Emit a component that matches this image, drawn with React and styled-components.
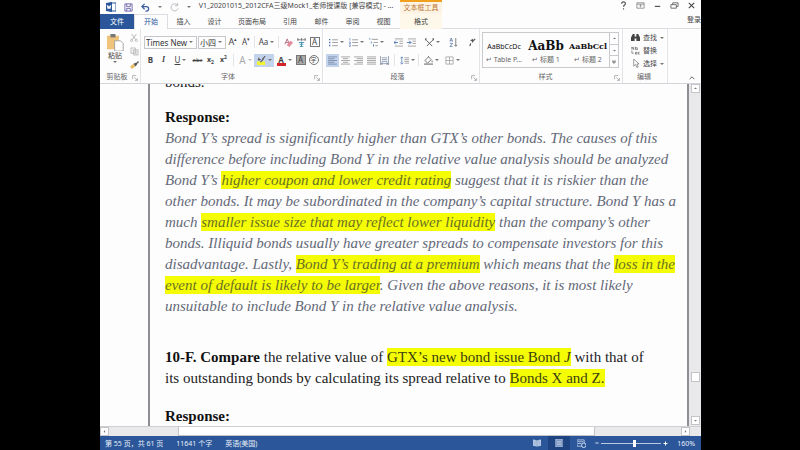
import styled, { createGlobalStyle } from 'styled-components';

const GlobalStyle = createGlobalStyle`
  * {
    box-sizing: border-box;
  }

  body {
    margin: 0;
    background: #000;
    font-family: 'Noto Sans', 'Noto Sans CJK SC', sans-serif;
    font-size: 7px;
    color: #444;
  }

  button,
  select {
    font: inherit;
    color: inherit;
    background: none;
    border: 0;
    padding: 0;
    margin: 0;
  }
`;

const Screen = styled.div`
  height: 100vh;
  padding: 0 99px 0 100px;
`;

const WordWindow = styled.div`
  height: 100%;
  display: flex;
  flex-direction: column;
  background: #fdfdfe;
`;

const TitleBar = styled.header`
  display: flex;
  height: 14px;
  line-height: 12px;
`;

const QuickAccess = styled.div`
  display: flex;
  align-items: center;
  gap: 8px;
  width: 92px;
  padding-left: 6px;
`;

const DocName = styled.div`
  width: 208px;
  font-size: 7px;
  text-align: center;
  white-space: nowrap;
`;

const ContextTitle = styled.div`
  width: 42px;
  border-top: 2px solid #f0a01c;
  background: #fdf3e4;
  color: #c07836;
  font-size: 7px;
  line-height: 11px;
  text-align: center;
  white-space: nowrap;
`;

const WindowButtons = styled.div`
  display: flex;
  align-items: center;
  gap: 8px;
  margin-left: auto;
  padding-right: 5px;
`;

const Tabs = styled.nav`
  display: flex;
  height: 15px;
  border-bottom: 1px solid #dcdde2;
`;

const Tab = styled.button`
  width: ${({ $width }) => $width || 31}px;
  height: 15px;
  font-size: 7px;
  line-height: 14px;
  white-space: nowrap;
  background: ${({ $tone }) =>
    ({ file: '#2b579a', context: '#fdf8ea', active: '#fdfdfe' })[$tone] ||
    'none'};
  color: ${({ $tone }) => ({ file: '#fff', active: '#2b579a' })[$tone] || '#444'};
  border: ${({ $tone }) => ($tone === 'active' ? '1px solid #dcdde2' : '0')};
  border-bottom: 0;
`;

const TabSpace = styled.div`
  width: 1px;
`;

const SignIn = styled.a`
  margin-left: auto;
  color: #444;
  font-size: 7px;
  line-height: 11px;
  text-decoration: none;
`;

const Ribbon = styled.div`
  display: flex;
  height: 55px;
  border-bottom: 1px solid #d4d5da;
`;

const Group = styled.section`
  position: relative;
  display: flex;
  flex-direction: column;
  width: ${({ $width }) => $width}px;
  padding: ${({ $pad }) => $pad || '4px 0 0 3px'};
  border-right: 1px solid #e3e4e8;
`;

const GroupName = styled.div`
  display: flex;
  justify-content: center;
  margin-top: auto;
  padding-right: 10px;
  font-size: 7px;
  line-height: 13px;
  color: #666;
  white-space: nowrap;
`;

const Launcher = styled.button`
  position: absolute;
  right: 2px;
  bottom: 2px;
  width: 6px;
  height: 6px;
  display: flex;
`;

const ToolRow = styled.div`
  display: flex;
  align-items: center;
  height: 18px;
`;

const Tool = styled.button`
  display: flex;
  align-items: center;
  justify-content: center;
  gap: 2px;
  flex: none;
  width: ${({ $width }) => $width || 13}px;
  height: 13px;
  font-size: 8px;
  line-height: 12px;
  white-space: nowrap;
  background: ${({ $on }) => ($on ? '#c3d3ec' : 'none')};
  opacity: ${({ $faded }) => ($faded ? 0.45 : 1)};
`;

const Divider = styled.span`
  width: 1px;
  height: 12px;
  margin: 0 ${({ $gap }) => $gap || 2}px;
  background: #e3e4e8;
`;

const Caret = styled.span`
  border: 2px solid transparent;
  border-top-color: #777;
  border-bottom: 0;
`;

const Picker = styled.label`
  display: flex;
  align-items: center;
  width: ${({ $width }) => $width}px;
  height: 13px;
  padding: 0 3px 0 1px;
  border: 1px solid #c6c7cc;

  & + & {
    margin-left: 1px;
  }

  select {
    flex: 1;
    min-width: 0;
    appearance: none;
    font-size: 8px;
    line-height: 11px;
    color: #333;
  }
`;

const ClipboardTools = styled.div`
  display: flex;
  gap: 4px;
`;

const PasteButton = styled.button`
  display: flex;
  flex-direction: column;
  align-items: center;
  width: 22px;
  font-size: 7px;
  line-height: 10px;
`;

const ClipboardSide = styled.div`
  display: flex;
  flex-direction: column;
  gap: 5px;
`;

const StyleGallery = styled.div`
  display: flex;
  height: 36px;
  border: 1px solid #c9cace;
`;

const StyleCard = styled.button`
  display: flex;
  flex-direction: column;
  align-items: center;
  justify-content: flex-end;
  width: 42px;
  overflow: hidden;
  padding-bottom: 2px;
  color: #666;
  font-size: 7px;
  line-height: 10px;
  white-space: nowrap;
`;

const StyleSample = styled.span`
  font-family: ${({ $serif }) =>
    $serif ? "'DejaVu Serif', serif" : "'Noto Sans', sans-serif"};
  font-weight: ${({ $serif }) => ($serif ? 700 : 400)};
  font-size: ${({ $size }) => $size}px;
  line-height: 17px;
  color: #111;
`;

const GalleryScroll = styled.div`
  display: flex;
  flex-direction: column;
  width: 9px;
  margin-left: auto;

  button {
    flex: 1;
    display: flex;
    align-items: center;
    justify-content: center;
    border-left: 1px solid #c9cace;
    border-bottom: 1px solid #c9cace;
  }

  button:last-child {
    border-bottom: 0;
  }
`;

const EditButton = styled.button`
  display: flex;
  align-items: center;
  gap: 3px;
  height: 13px;
  font-size: 7px;
  line-height: 13px;
  white-space: nowrap;
`;

const CollapseArea = styled.div`
  display: flex;
  flex: 1;
  align-items: flex-end;
  justify-content: flex-end;
  padding-right: 6px;
`;

const Workspace = styled.div`
  display: flex;
  flex: 1;
  min-height: 0;
`;

const Page = styled.main`
  flex: 1;
  min-width: 0;
  overflow: hidden;
  padding-left: 48px;
`;

const TextFrame = styled.article`
  height: 100%;
  overflow: hidden;
  padding-left: 15px;
  border-left: 2px solid #8e8e94;
  border-right: 2px solid #8e8e94;
  font-family: 'Liberation Serif', serif;
  font-size: 15px;
  line-height: 21px;
  color: #222;
  white-space: nowrap;
`;

const Paragraph = styled.p`
  margin: ${({ $top }) => $top || 0}px 0 0;
  font-style: ${({ $italic }) => ($italic ? 'italic' : 'normal')};
  color: ${({ $italic }) => ($italic ? '#646977' : '#222')};
`;

const Line = styled.span`
  display: block;
`;

const Strong = styled.strong`
  color: #111;
`;

const Mark = styled.mark`
  padding: 1px 0;
  background: #f5fd04;
  color: ${({ $dark }) => ($dark ? '#3b3f10' : '#6b7024')};
`;

const VerticalScroll = styled.div`
  display: flex;
  flex-direction: column;
  width: 12px;
  padding: 0 1px 1px 2px;
  background: #e9e9eb;
`;

const ScrollButton = styled.button`
  display: flex;
  align-items: center;
  justify-content: center;
  flex: none;
  width: 9px;
  height: 9px;
  background: #fff;
  border: 1px solid #c4c4c8;
`;

const VerticalThumb = styled.div`
  height: 10px;
  margin: auto 0 34px;
  background: #fff;
  border: 1px solid #c4c4c8;
`;

const HorizontalScroll = styled.div`
  display: flex;
  height: 10px;
  padding-right: 11px;
  background: #e9e9eb;
  border-top: 1px solid #d0d0d4;
`;

const HorizontalThumb = styled.div`
  flex: 1;
  margin: 0 86px 0 69px;
  background: #fff;
  border: 1px solid #c4c4c8;
  border-top: 0;
`;

const StatusBar = styled.footer`
  display: flex;
  align-items: center;
  height: 14px;
  padding: 0 6px 0 5px;
  background: #2b579a;
  color: #e8eef8;
  font-size: 7px;
  line-height: 13px;
  white-space: pre;
`;

const StatusText = styled.span`
  margin-right: 13px;
`;

const ViewButtons = styled.div`
  display: flex;
  margin-left: auto;
`;

const ViewButton = styled.button`
  display: flex;
  align-items: center;
  justify-content: center;
  width: 22px;
  height: 14px;
  background: ${({ $on }) => ($on ? '#1f4482' : 'none')};
`;

const ZoomControl = styled.div`
  display: flex;
  align-items: center;
  gap: 2px;
  margin-left: 3px;

  button {
    display: flex;
  }
`;

const ZoomSlider = styled.input`
  appearance: none;
  width: 60px;
  height: 9px;
  margin: 0;
  background: linear-gradient(#b9c9e4, #b9c9e4) center / 100% 1px no-repeat;

  &::-webkit-slider-thumb {
    appearance: none;
    width: 3px;
    height: 7px;
    background: #fff;
  }
`;

const ZoomValue = styled.span`
  width: 20px;
  margin-left: 5px;
  text-align: right;
`;

const shapes = {
  word: (
    <>
      <rect x="4" y="1" width="6" height="8" fill="#fff" stroke="#2b579a" />
      <path d="M0 1l6-1v10L0 9z" fill="#2b579a" />
      <path d="M1.2 3.2l.9 3.6.9-3 .9 3 .9-3.6" stroke="#fff" fill="none" />
    </>
  ),
  save: (
    <g fill="none" stroke="#6a62a8">
      <path d="M1 1h8v8H1z" />
      <path d="M3 1v3h4V1M3 9V6h4v3" />
    </g>
  ),
  undo: (
    <path d="M4 1L1 4l3 3M1.500 4H6a2.500 2.500 0 010 5H5" fill="none" stroke="#3c5f9e" strokeWidth="1.400" />
  ),
  redo: (
    <path d="M8 2A4 4 0 109 6M8.500 0v3h-3" fill="none" stroke="#b4b7be" />
  ),
  help: <path d="M3 3c0-3 4.500-2.500 4 0 0 1.500-2 1.500-2 3.500M5 8v1.500" fill="none" stroke="#555" strokeWidth="1.300" />,
  ribbonMode: (
    <path d="M1 2h8v6H1zM1 3.500h8M5 7V4.500M3.800 5.500L5 4.300l1.200 1.200" fill="none" stroke="#777" strokeWidth=".8" />
  ),
  minimize: <path d="M2 6h6" stroke="#555" strokeWidth="1.300" />,
  restore: <path d="M1 4h6v4H1zM3 4V2h6v4H7" fill="none" stroke="#666" />,
  close: <path d="M2 2l6 6M8 2L2 8" stroke="#444" strokeWidth="1.200" />,
  paste: (
    <>
      <path d="M0 1h7v8H0z" fill="#efc37a" />
      <path d="M2 0h3v2H2z" fill="#777" />
      <path d="M4.500 4H8l1.500 1.500V10h-5z" fill="#fff" stroke="#999" strokeWidth=".5" />
    </>
  ),
  cut: (
    <g fill="none" stroke="#aaa">
      <path d="M2 0l5 7M8 0L3 7" />
      <circle cx="2" cy="8" r="1.300" />
      <circle cx="8" cy="8" r="1.300" />
    </g>
  ),
  copy: (
    <path d="M1 1h5v6H1zM4 3h5v6H4zM5.500 5h2M5.500 7h2" fill="#eee" stroke="#b5b5b5" strokeWidth=".8" />
  ),
  brush: (
    <>
      <path d="M0 6l4-3 2 3-4 3z" fill="#e9bd68" />
      <path d="M4 3l2-1 2 2-2 2zM6.500 2.500L9 0l1 1-2.500 2.500z" fill="#555" />
    </>
  ),
  eraser: (
    <>
      <path d="M1 7l2.500-6L6 7M2 5h3" fill="none" stroke="#b06a7c" />
      <path d="M3 8l4-5 3 2-4 5z" fill="#e58a9c" />
    </>
  ),
  phonetic: (
    <>
      <path d="M0 2h10M1 0v3M5 0v3M9 0v3" stroke="#777" fill="none" />
      <path d="M2 5h6M5 4v6M3 9.500h4M3 7h4" stroke="#3f93ad" fill="none" />
    </>
  ),
  highlight: (
    <>
      <path d="M1 4h3M2 2v3M6 4l3-4" stroke="#555" fill="none" strokeWidth="1.200" />
      <path d="M0 6h9v4H0z" fill="#f3f532" />
      <path d="M3 7l4-5 1 1-3 4z" fill="#667" />
    </>
  ),
  bullets: (
    <>
      <path d="M0 1h1.500v1.500H0zM0 4.300h1.500v1.500H0zM0 7.600h1.500v1.500H0z" fill="#4b74ae" />
      <path d="M3.500 2H10M3.500 5H10M3.500 8.500H10" stroke="#999" />
    </>
  ),
  numbers: (
    <>
      <path d="M1 0v3M0 4.500h1.500V6H0M0 7.500h1.500v2H0" stroke="#4b74ae" fill="none" strokeWidth=".7" />
      <path d="M3.500 2H10M3.500 5H10M3.500 8.500H10" stroke="#999" />
    </>
  ),
  multilevel: (
    <>
      <path d="M0 1h1.500M2.500 4v2M5 7v2.500" stroke="#4b74ae" />
      <path d="M3 1.500h7M5 5h5M7 8.500h3" stroke="#999" />
    </>
  ),
  outdent: (
    <>
      <path d="M1 1h9M6 3.500h4M6 6h4M1 9h9" stroke="#888" strokeWidth=".8" />
      <path d="M4.500 5H0M2 3L0 5l2 2" stroke="#4b74ae" fill="none" />
    </>
  ),
  indent: (
    <>
      <path d="M1 1h9M6 3.500h4M6 6h4M1 9h9" stroke="#888" strokeWidth=".8" />
      <path d="M0 5h4.500M2.500 3l2 2-2 2" stroke="#4b74ae" fill="none" />
    </>
  ),
  asianLayout: (
    <path d="M2 9l6-6M2 3l6 6M0 1l2 2M10 1L8 3M0 3V1h2M8 1h2v2" fill="none" stroke="#555" />
  ),
  sort: (
    <>
      <path d="M1 4l1.500-4L4 4M1.500 3h2M1 6h3L1 9.500h3" fill="none" stroke="#55709e" strokeWidth=".8" />
      <path d="M7.500 0v9M6 7.500L7.500 9.300 9 7.500" fill="none" stroke="#777" />
    </>
  ),
  mark: <path d="M8 1L5 4M3 3l2-1v3M2 9l1-3" fill="none" stroke="#555" strokeWidth="1.300" />,
  alignLeft: <path d="M0 1h10M0 3h7M0 5h10M0 7h7M0 9h10" stroke="#667c9d" strokeWidth=".8" />,
  alignCenter: <path d="M0 1h10M2 3h6M0 5h10M2 7h6M0 9h10" stroke="#888" strokeWidth=".8" />,
  alignRight: <path d="M0 1h10M3 3h7M0 5h10M3 7h7M0 9h10" stroke="#888" strokeWidth=".8" />,
  justify: <path d="M0 1h10M0 3h10M0 5h10M0 7h10M0 9h10" stroke="#888" strokeWidth=".8" />,
  distribute: (
    <path d="M.5 0v10M9.500 0v10M2 2h6M2 4h6M2 6h6M1 8.500h8M3 7L1 8.500 3 10M7 7l2 1.500L7 10" fill="none" stroke="#71819a" strokeWidth=".8" />
  ),
  spacing: (
    <>
      <path d="M2 1v8M.5 2.500L2 1l1.500 1.500M.5 7.500L2 9l1.500-1.500" fill="none" stroke="#4b74ae" strokeWidth=".8" />
      <path d="M5 2h5M5 4h5M5 6h5M5 8h5" stroke="#888" strokeWidth=".8" />
    </>
  ),
  fill: (
    <>
      <path d="M1 5l4-4 3 3-4 4zM5 1V0M9 5v2" fill="#fff" stroke="#666" />
      <path d="M0 9h10" stroke="#888" strokeWidth="1.500" />
    </>
  ),
  borders: (
    <path d="M1 1h8v8H1zM5 1v8M1 5h8" fill="none" stroke="#999" strokeWidth=".8" />
  ),
  find: (
    <path d="M0 9V5l2-4h2v3h2V1h2l2 4v4H6V6H4v3z" fill="#444" />
  ),
  replace: (
    <>
      <path d="M1 4V1l2 3V1M5 1v3h2V2H5" fill="none" stroke="#666" strokeWidth=".8" />
      <path d="M1 5v3h2M5 9V7h1.500v2zM9.500 7H8v2h1.500" fill="none" stroke="#666" strokeWidth=".8" />
    </>
  ),
  select: <path d="M3 0v8l2-2 1.500 3.500L8 9 6.500 5.500H9z" fill="#fff" stroke="#777" strokeWidth=".8" />,
  launcher: <path d="M1 7V1h6M4 4l5 5M9 5v4H5" fill="none" stroke="#888" />,
  up: <path d="M1 7l4-4 4 4" fill="none" stroke="#555" strokeWidth="1.500" />,
  arrowUp: <path d="M0 7l5-5 5 5z" fill="#777" />,
  arrowDown: <path d="M0 3l5 5 5-5z" fill="#777" />,
  arrowMore: <path d="M0 1h10M0 4l5 5 5-5z" fill="#777" stroke="#777" />,
  arrowLeft: <path d="M7 0L2 5l5 5z" fill="#777" />,
  arrowRight: <path d="M3 0l5 5-5 5z" fill="#777" />,
  read: (
    <path d="M0 1l4.500 1v7L0 8zM10 1L5.500 2v7L10 8z" fill="#a9bddc" stroke="#dbe5f4" strokeWidth=".6" />
  ),
  print: <path d="M1 0h8v10H1zM2.500 3h5M2.500 5h5M2.500 7h5" fill="#7892bf" stroke="#c5d3ea" strokeWidth=".9" />,
  web: (
    <>
      <path d="M0 1h8v7H0zM1 3h6M1 5h4" fill="none" stroke="#c5d3ea" strokeWidth=".9" />
      <circle cx="7.500" cy="7" r="2.500" fill="#2b579a" stroke="#dbe5f4" />
    </>
  ),
  minus: <path d="M1 5h8" stroke="#fff" strokeWidth="2" />,
  plus: <path d="M1 5h8M5 1v8" stroke="#fff" strokeWidth="2" />,
};

const Icon = ({ name, size = 9 }) => (
  <svg width={size} height={size} viewBox="0 0 10 10" aria-hidden="true">
    {shapes[name]}
  </svg>
);

const Letter = styled.span`
  font-size: ${({ $size }) => $size || 8}px;
  font-weight: ${({ $bold }) => ($bold ? 700 : 400)};
  font-style: ${({ $italic }) => ($italic ? 'italic' : 'normal')};
  font-family: ${({ $serif }) => ($serif ? "'Liberation Serif', serif" : 'inherit')};
  text-decoration: ${({ $line }) => $line || 'none'};

  sub,
  sup {
    font-size: 5px;
    line-height: 1px;
  }
`;

const BoxedLetter = styled.span`
  width: 10px;
  height: 10px;
  border: 1px solid #777;
  border-radius: ${({ $round }) => ($round ? '50%' : '0')};
  background: ${({ $shaded }) => ($shaded ? '#aaa' : 'none')};
  font-size: ${({ $round }) => ($round ? 6 : 8)}px;
  line-height: 8px;
  text-align: center;
`;

const RedLetter = styled.span`
  width: 9px;
  height: 11px;
  border-bottom: 3px solid #d5232b;
  font-size: 8px;
  font-weight: 700;
  line-height: 9px;
`;

const IconTool = ({ icon, label, width, caret, on }) => (
  <Tool $width={width} $on={on} aria-label={label}>
    <Icon name={icon} />
    {caret && <Caret />}
  </Tool>
);

const tabs = [
  { name: '文件', width: 34, tone: 'file' },
  { name: '开始', width: 34, tone: 'active' },
  { name: '插入' },
  { name: '设计' },
  { name: '页面布局', width: 44 },
  { name: '引用', width: 32 },
  { name: '邮件' },
  { name: '审阅' },
  { name: '视图' },
];

const ClipboardGroup = () => (
  <Group $width={41} $pad="5px 0 0 4px">
    <ClipboardTools>
      <PasteButton>
        <Icon name="paste" size={17} />
        粘贴
        <Caret />
      </PasteButton>
      <ClipboardSide>
        <Icon name="cut" size={8} />
        <Icon name="copy" />
        <Icon name="brush" />
      </ClipboardSide>
    </ClipboardTools>
    <GroupName>剪贴板</GroupName>
    <Launcher aria-label="剪贴板选项">
      <Icon name="launcher" size={6} />
    </Launcher>
  </Group>
);

const FontGroup = () => (
  <Group $width={182}>
    <ToolRow>
      <Picker $width={53}>
        <select aria-label="字体名称">
          <option>Times New F</option>
        </select>
        <Caret />
      </Picker>
      <Picker $width={28}>
        <select aria-label="字号">
          <option>小四</option>
        </select>
        <Caret />
      </Picker>
      <Tool $width={14} aria-label="增大字号">
        <Letter $size={9}>A<sup>▴</sup></Letter>
      </Tool>
      <Tool $width={12} aria-label="减小字号">
        <Letter>A<sup>▾</sup></Letter>
      </Tool>
      <Divider />
      <Tool $width={19} aria-label="更改大小写">
        Aa
        <Caret />
      </Tool>
      <Divider />
      <IconTool icon="eraser" label="清除格式" width={14} />
      <IconTool icon="phonetic" label="拼音指南" width={13} />
      <Tool aria-label="字符边框">
        <BoxedLetter>A</BoxedLetter>
      </Tool>
    </ToolRow>
    <ToolRow>
      <Tool aria-label="加粗"><Letter $bold>B</Letter></Tool>
      <Tool aria-label="倾斜"><Letter $italic $bold $serif>I</Letter></Tool>
      <Tool $width={21} aria-label="下划线">
        <Letter $line="underline">U</Letter>
        <Caret />
      </Tool>
      <Tool aria-label="删除线"><Letter $size={6} $line="line-through">abc</Letter></Tool>
      <Tool aria-label="下标"><Letter $bold $size={7}>x<sub>2</sub></Letter></Tool>
      <Tool aria-label="上标"><Letter $bold $size={7}>x<sup>2</sup></Letter></Tool>
      <Divider $gap={3} />
      <Tool $width={17} $faded aria-label="文本效果">
        <Letter $size={10}>A</Letter>
        <Caret />
      </Tool>
      <IconTool icon="highlight" label="突出显示" width={20} caret on />
      <Tool $width={20} aria-label="字体颜色">
        <RedLetter>A</RedLetter>
        <Caret />
      </Tool>
      <Tool aria-label="字符底纹"><BoxedLetter $shaded>A</BoxedLetter></Tool>
      <Tool aria-label="带圈字符"><BoxedLetter $round>字</BoxedLetter></Tool>
    </ToolRow>
    <GroupName>字体</GroupName>
    <Launcher aria-label="字体选项">
      <Icon name="launcher" size={6} />
    </Launcher>
  </Group>
);

const ParagraphGroup = () => (
  <Group $width={157}>
    <ToolRow>
      <IconTool icon="bullets" label="项目符号" width={20} caret />
      <IconTool icon="numbers" label="编号" width={20} caret />
      <IconTool icon="multilevel" label="多级列表" width={20} caret />
      <Divider $gap={3} />
      <IconTool icon="outdent" label="减少缩进量" />
      <IconTool icon="indent" label="增加缩进量" />
      <Divider />
      <IconTool icon="asianLayout" label="中文版式" width={20} caret />
      <Divider />
      <IconTool icon="sort" label="排序" width={15} />
      <Divider />
      <IconTool icon="mark" label="编辑标记" width={14} />
    </ToolRow>
    <ToolRow>
      <IconTool icon="alignLeft" label="左对齐" on />
      <IconTool icon="alignCenter" label="居中" />
      <IconTool icon="alignRight" label="右对齐" />
      <IconTool icon="justify" label="两端对齐" />
      <IconTool icon="distribute" label="分散对齐" />
      <Divider $gap={3} />
      <IconTool icon="spacing" label="行距" width={18} caret />
      <Divider />
      <IconTool icon="fill" label="底纹" width={21} caret />
      <IconTool icon="borders" label="边框" width={20} caret />
    </ToolRow>
    <GroupName>段落</GroupName>
    <Launcher aria-label="段落选项">
      <Icon name="launcher" size={6} />
    </Launcher>
  </Group>
);

const StylesGroup = () => (
  <Group $width={143} $pad="3px 3px 0 2px">
    <StyleGallery>
      <StyleCard>
        <StyleSample $size={7}>AaBbCcDc</StyleSample>
        ↵ Table P...
      </StyleCard>
      <StyleCard>
        <StyleSample $size={12} $serif>AaBb</StyleSample>
        ↵ 标题 1
      </StyleCard>
      <StyleCard>
        <StyleSample $size={8} $serif>AaBbCcl</StyleSample>
        ↵ 标题 2
      </StyleCard>
      <GalleryScroll>
        <button aria-label="上一行"><Icon name="arrowUp" size={3} /></button>
        <button aria-label="下一行"><Icon name="arrowDown" size={3} /></button>
        <button aria-label="其他样式"><Icon name="arrowMore" size={4} /></button>
      </GalleryScroll>
    </StyleGallery>
    <GroupName>样式</GroupName>
    <Launcher aria-label="样式选项">
      <Icon name="launcher" size={6} />
    </Launcher>
  </Group>
);

const EditingGroup = () => (
  <Group $width={45} $pad="2px 0 0 8px">
    <EditButton><Icon name="find" />查找<Caret /></EditButton>
    <EditButton><Icon name="replace" />替换</EditButton>
    <EditButton><Icon name="select" />选择<Caret /></EditButton>
    <GroupName>编辑</GroupName>
  </Group>
);

const App = () => {
  return (
    <Screen>
      <GlobalStyle />
      <WordWindow>
        <TitleBar>
          <QuickAccess>
            <Icon name="word" size={10} />
            <Icon name="save" />
            <Icon name="undo" />
            <Caret />
            <Icon name="redo" />
            <Caret />
          </QuickAccess>
          <DocName>V1_20201015_2012CFA三级Mock1_老师授课版 [兼容模式] - ...</DocName>
          <ContextTitle>文本框工具</ContextTitle>
          <WindowButtons>
            <button aria-label="帮助"><Icon name="help" /></button>
            <button aria-label="功能区显示选项"><Icon name="ribbonMode" /></button>
            <button aria-label="最小化"><Icon name="minimize" /></button>
            <button aria-label="还原"><Icon name="restore" /></button>
            <button aria-label="关闭"><Icon name="close" /></button>
          </WindowButtons>
        </TitleBar>
        <Tabs>
          {tabs.map(({ name, width, tone }) => (
            <Tab key={name} $width={width} $tone={tone}>{name}</Tab>
          ))}
          <TabSpace />
          <Tab $width={42} $tone="context">格式</Tab>
          <SignIn href="#">登录</SignIn>
        </Tabs>
        <Ribbon>
          <ClipboardGroup />
          <FontGroup />
          <ParagraphGroup />
          <StylesGroup />
          <EditingGroup />
          <CollapseArea>
            <button aria-label="折叠功能区"><Icon name="up" size={6} /></button>
          </CollapseArea>
        </Ribbon>
        <Workspace>
          <Page>
            <TextFrame>
              <Paragraph $top={-12}>bonds.</Paragraph>
              <Paragraph $top={14}><Strong>Response:</Strong></Paragraph>
              <Paragraph $italic>
                <Line>Bond Y’s spread is significantly higher than GTX’s other bonds. The causes of this</Line>
                <Line>difference before including Bond Y in the relative value analysis should be analyzed</Line>
                <Line>Bond Y’s <Mark>higher coupon and lower credit rating</Mark> suggest that it is riskier than the</Line>
                <Line>other bonds. It may be subordinated in the company’s capital structure. Bond Y has a</Line>
                <Line>much <Mark>smaller issue size that may reflect lower liquidity</Mark> than the company’s other</Line>
                <Line>bonds. Illiquid bonds usually have greater spreads to compensate investors for this</Line>
                <Line>disadvantage. Lastly, <Mark>Bond Y’s trading at a premium</Mark> which means that the <Mark>loss in the</Mark></Line>
                <Line><Mark>event of default is likely to be larger</Mark>. Given the above reasons, it is most likely</Line>
                <Line>unsuitable to include Bond Y in the relative value analysis.</Line>
              </Paragraph>
              <Paragraph $top={30}>
                <Line><Strong>10-F. Compare</Strong> the relative value of <Mark $dark>GTX’s new bond issue Bond <i>J</i></Mark> with that of</Line>
                <Line>its outstanding bonds by calculating its spread relative to <Mark $dark>Bonds X and Z.</Mark></Line>
              </Paragraph>
              <Paragraph $top={17}><Strong>Response:</Strong></Paragraph>
            </TextFrame>
          </Page>
          <VerticalScroll>
            <ScrollButton aria-label="向上滚动"><Icon name="arrowUp" size={3} /></ScrollButton>
            <VerticalThumb />
            <ScrollButton aria-label="向下滚动"><Icon name="arrowDown" size={3} /></ScrollButton>
          </VerticalScroll>
        </Workspace>
        <HorizontalScroll>
          <ScrollButton aria-label="向左滚动"><Icon name="arrowLeft" size={3} /></ScrollButton>
          <HorizontalThumb />
          <ScrollButton aria-label="向右滚动"><Icon name="arrowRight" size={3} /></ScrollButton>
        </HorizontalScroll>
        <StatusBar>
          <StatusText>第 55 页，共 61 页</StatusText>
          <StatusText>11641 个字</StatusText>
          <StatusText>英语(美国)</StatusText>
          <ViewButtons>
            <ViewButton aria-label="阅读视图"><Icon name="read" size={8} /></ViewButton>
            <ViewButton $on aria-label="页面视图"><Icon name="print" size={8} /></ViewButton>
            <ViewButton aria-label="Web 版式视图"><Icon name="web" size={9} /></ViewButton>
          </ViewButtons>
          <ZoomControl>
            <button aria-label="缩小"><Icon name="minus" size={4} /></button>
            <ZoomSlider type="range" min="10" max="260" defaultValue="152" aria-label="显示比例" />
            <button aria-label="放大"><Icon name="plus" size={5} /></button>
            <ZoomValue>160%</ZoomValue>
          </ZoomControl>
        </StatusBar>
      </WordWindow>
    </Screen>
  );
};

export default App;
